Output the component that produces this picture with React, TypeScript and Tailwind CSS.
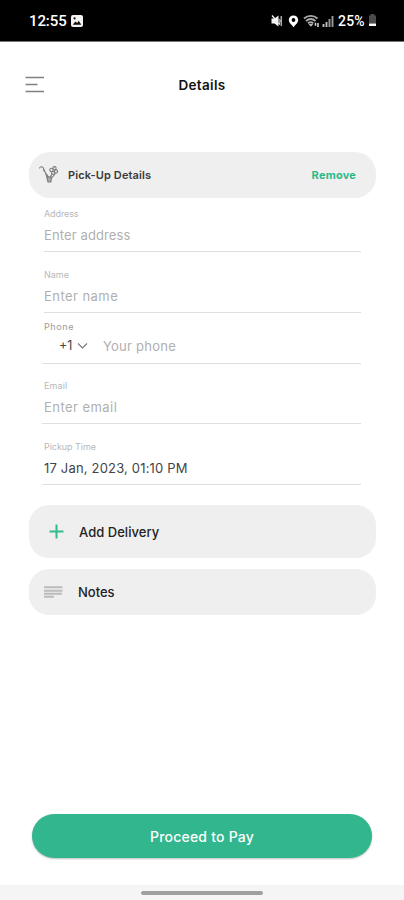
import React from "react";

type FieldProps = {
  label: string;
  className: string;
  labelClassName: string;
  children: React.ReactNode;
};

function Field({ label, className, labelClassName, children }: FieldProps) {
  return (
    <div className={`flex flex-col border-b border-[#dfdfdf] ${className}`}>
      <div className={`h-3 whitespace-nowrap text-[9px] leading-3 ${labelClassName}`}>{label}</div>
      {children}
    </div>
  );
}

function StatusBar() {
  return (
    <div className="flex h-[42px] items-center justify-between border-b border-[#777] bg-black pl-[29px] pr-[27px] font-['Roboto',sans-serif] text-white">
      <div className="flex items-center gap-[5px]">
        <span className="w-[37px] whitespace-nowrap text-[15px] font-medium leading-5 tracking-[-0.1px]">12:55</span>
        <svg width="12" height="12" viewBox="0 0 12 12">
          <rect width="12" height="12" rx="2" fill="#f2f2f2" />
          <path d="M1.7 9.8 4.4 6.6l1.7 1.5 1.6-2.3 2.6 4z" fill="#111" />
          <circle cx="3.6" cy="3.4" r="1.1" fill="#111" />
        </svg>
      </div>
      <div className="flex items-center">
        <svg width="66" height="14" viewBox="0 0 66 14">
          <path d="M0.5 4.500h3l4-3v11l-4-3h-3z" fill="#f5f5f5" />
          <path d="M1 1.500l8 9" stroke="#f5f5f5" strokeWidth="1.300" />
          <path d="M10.300 2v10M7.500 5l2 2-2 2" fill="none" stroke="#a8a8a8" strokeWidth="1.500" />
          <path d="M22.500 1.500c-2.700 0-4.700 2-4.700 4.600 0 2.800 2.700 4.500 4.700 7.100 2-2.600 4.700-4.300 4.700-7.100 0-2.600-2-4.600-4.700-4.600z" fill="#fff" />
          <circle cx="22.500" cy="6" r="1.900" fill="#000" />
          <path d="M33 4.500c4-3.500 9.500-3.500 13.500 0M35 7c3-2.500 6.500-2.500 9.500 0M37 9.300c1.600-1.300 3.700-1.300 5.300 0" fill="none" stroke="#aaa" strokeWidth="1.900" />
          <path d="M37.500 10h4.800l-2.400 2.800z" fill="#bbb" />
          <path d="M44.500 8.700v3M47 9v4" stroke="#ddd" strokeWidth="1.500" />
          <path d="M52.500 10v3M55.500 8v5" stroke="#bbb" strokeWidth="1.900" />
          <path d="M58.500 5v8M61.500 2v11" stroke="#999" strokeWidth="1.900" />
        </svg>
        <span className="ml-[1px] w-[29px] whitespace-nowrap text-[14px] font-medium leading-5 tracking-[0.2px]">25%</span>
        <svg className="ml-[1px]" width="9" height="13" viewBox="0 0 9 13">
          <path d="M2.500 0h4v1.500H8V9.500H1V1.500h1.500z" fill="#4b4b4b" />
          <path d="M1 9.500h7v2q0 .5-.5.5h-6q-.5 0-.5-.5z" fill="#fff" />
        </svg>
      </div>
    </div>
  );
}

function FlowerIcon() {
  return (
    <svg width="20" height="20" viewBox="0 0 20 20" fill="none" stroke="#7b7b7b" strokeWidth="1.100" strokeLinecap="round">
      <path d="M0.500 3C2 .8 4 1.500 5 4.500L8.500 13M13 9l-3 5M16 9l-5 6M4.500 5l5 7" />
      <circle cx="12.500" cy="5" r="1.700" />
      <circle cx="15.500" cy="3.200" r="1.600" />
      <circle cx="17" cy="6.500" r="1.600" />
      <circle cx="14" cy="8" r="1.500" />
      <path d="M7.800 12h4.700l-.6 5H9z" fill="#aaa" />
    </svg>
  );
}

export default function App() {
  return (
    <div className="flex h-[900px] w-[404px] flex-col overflow-hidden bg-white font-['Inter',sans-serif]">
      <StatusBar />

      <header className="flex h-[86px] items-center justify-between pl-[25px] pr-[25px]">
        <svg width="20" height="18" viewBox="0 0 20 18" stroke="#808080" strokeWidth="1.700">
          <path d="M.5 1.500h18.500M.5 8.500h12M.5 15.500h18.500" />
        </svg>
        <h1 className="whitespace-nowrap text-[13.5px] font-semibold leading-5 tracking-[0.35px] text-[#111]">Details</h1>
        <div className="w-5" />
      </header>

      <main className="flex flex-1 flex-col pl-[29px] pr-[28px] pt-6">
        <div className="flex h-[46px] items-center rounded-[21px] bg-[#efefef] pl-[10px] pr-5">
          <FlowerIcon />
          <span className="ml-[9px] whitespace-nowrap text-[11px] font-semibold leading-4 tracking-[0.12px] text-[#3a3a3a]">Pick-Up Details</span>
          <button className="ml-auto whitespace-nowrap text-[11px] font-bold leading-4 tracking-[0.2px] text-[#2bb98b]">Remove</button>
        </div>

        <div className="flex flex-col pl-[15px] pr-[15px]">
          <Field label="Address" className="h-[54px] pt-[10px]" labelClassName="tracking-[-0.1px] text-[#b8b8b8]">
            <div className="mt-[6px] whitespace-nowrap text-[13px] leading-[18px] tracking-[0.12px] text-[#b0b0b0]">Enter address</div>
          </Field>
          <Field label="Name" className="h-[61px] pt-[17px]" labelClassName="text-[#b8b8b8]">
            <div className="mt-[6px] whitespace-nowrap text-[13px] leading-[18px] tracking-[0.45px] text-[#b0b0b0]">Enter name</div>
          </Field>
          <Field label="Phone" className="-ml-[2px] h-[51px] pl-[2px] pt-2" labelClassName="tracking-[0.6px] text-[#999]">
            <div className="mt-1 flex h-[18px] items-center whitespace-nowrap text-[13px] leading-[18px]">
              <span className="ml-[15px] w-[15px] text-[12.5px] text-[#444]">+1</span>
              <svg className="ml-[3px]" width="11" height="8" viewBox="0 0 11 8" fill="none" stroke="#777" strokeWidth="1.100">
                <path d="M1 1.500 5.500 6 10 1.500" />
              </svg>
              <span className="ml-[15px] tracking-[0.25px] text-[#b0b0b0]">Your phone</span>
            </div>
          </Field>
          <Field label="Email" className="-ml-[2px] h-[60px] pl-[2px] pt-4" labelClassName="tracking-[0.1px] text-[#b8b8b8]">
            <div className="mt-[6px] whitespace-nowrap text-[13px] leading-[18px] tracking-[0.45px] text-[#b0b0b0]">Enter email</div>
          </Field>
          <Field label="Pickup Time" className="-ml-[2px] h-[61px] pl-[2px] pt-[17px]" labelClassName="tracking-[-0.05px] text-[#b8b8b8]">
            <div className="mt-[6px] whitespace-nowrap text-[13px] leading-[18px] tracking-[0.18px] text-[#444]">17 Jan, 2023, 01:10 PM</div>
          </Field>
        </div>

        <button className="mt-5 flex h-[53px] items-center rounded-[20px] bg-[#efefef] pl-5">
          <svg width="15" height="15" viewBox="0 0 15 15" stroke="#35b98f" strokeWidth="2">
            <path d="M7.500 .5v14M.5 7.500h14" />
          </svg>
          <span className="ml-[15px] whitespace-nowrap text-[13px] font-medium leading-5 tracking-[0.03px] text-[#222]">Add Delivery</span>
        </button>

        <button className="mt-[11px] flex h-[46px] items-center rounded-[20px] bg-[#efefef] pl-[15px]">
          <svg width="19" height="13" viewBox="0 0 19 13" stroke="#bcbcbc" strokeWidth="1.900">
            <path d="M0 1.200h18.500M0 4.800h18.500M0 7.800h18M0 10.800h10" />
          </svg>
          <span className="ml-[15px] whitespace-nowrap text-[13px] font-medium leading-5 text-[#222]">Notes</span>
        </button>
      </main>

      <button className="mb-[27px] ml-8 mr-8 flex h-11 items-center justify-center rounded-full bg-[#31b68d] pt-[2px] text-[14px] font-medium text-white shadow-[0_1px_2px_rgba(0,0,0,0.25)]">
        <span className="whitespace-nowrap leading-5 tracking-[0.22px]">Proceed to Pay</span>
      </button>
      <div className="flex h-[15px] justify-center bg-[#f5f5f5] pt-[6px]">
        <div className="h-[4px] w-[122px] rounded-full bg-[#a0a0a0]" />
      </div>
    </div>
  );
}
